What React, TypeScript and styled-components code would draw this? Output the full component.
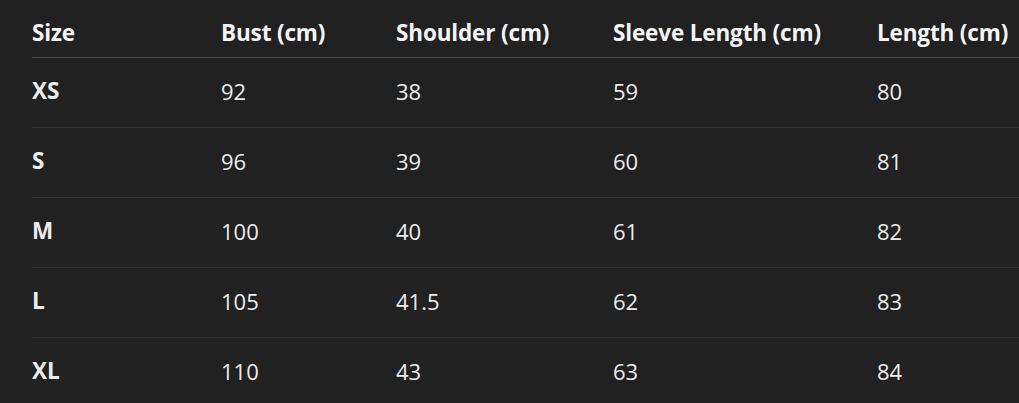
import React from 'react'
import styled, { createGlobalStyle } from 'styled-components'

const GlobalStyle = createGlobalStyle`
  html, body {
    margin: 0;
    padding: 0;
    background: #212121;
  }
`

const columns = ['Size', 'Bust (cm)', 'Shoulder (cm)', 'Sleeve Length (cm)', 'Length (cm)']

const rows = [
  ['XS', '92', '38', '59', '80'],
  ['S', '96', '39', '60', '81'],
  ['M', '100', '40', '61', '82'],
  ['L', '105', '41.5', '62', '83'],
  ['XL', '110', '43', '63', '84'],
]

const Wrapper = styled.div`
  width: 1019px;
  height: 403px;
  overflow: hidden;
  background: #212121;
  padding-left: 32px;
  box-sizing: border-box;
  font-family: 'Open Sans', 'Noto Sans', sans-serif;
  color: #ececec;
`

const Row = styled.div<{ $head?: boolean }>`
  display: grid;
  grid-template-columns: 189px 175px 217px 264px 1fr;
  height: ${({ $head }) => ($head ? '58px' : '70px')};
  align-items: ${({ $head }) => ($head ? 'end' : 'center')};
  border-bottom: 1px solid ${({ $head }) => ($head ? '#4a4a4a' : '#303030')};
  box-sizing: border-box;
  &:last-child {
    border-bottom: none;
  }
`

const HeadCell = styled.div`
  font-size: 22.5px;
  line-height: 30px;
  font-weight: 700;
  letter-spacing: -0.15px;
  padding-bottom: 9px;
  white-space: nowrap;
  color: #f4f4f4;
`

const Cell = styled.div<{ $bold?: boolean }>`
  font-size: ${({ $bold }) => ($bold ? '22.5px' : '22px')};
  line-height: 30px;
  font-weight: ${({ $bold }) => ($bold ? 700 : 400)};
  white-space: nowrap;
  margin-top: -4px;
`

const App: React.FC = () => {
  return (
    <>
      <GlobalStyle />
      <Wrapper>
        <Row $head>
          {columns.map((c) => (
            <HeadCell key={c}>{c}</HeadCell>
          ))}
        </Row>
        {rows.map((r) => (
          <Row key={r[0]}>
            {r.map((v, i) => (
              <Cell key={i} $bold={i === 0}>
                {v}
              </Cell>
            ))}
          </Row>
        ))}
      </Wrapper>
    </>
  )
}

export default App
